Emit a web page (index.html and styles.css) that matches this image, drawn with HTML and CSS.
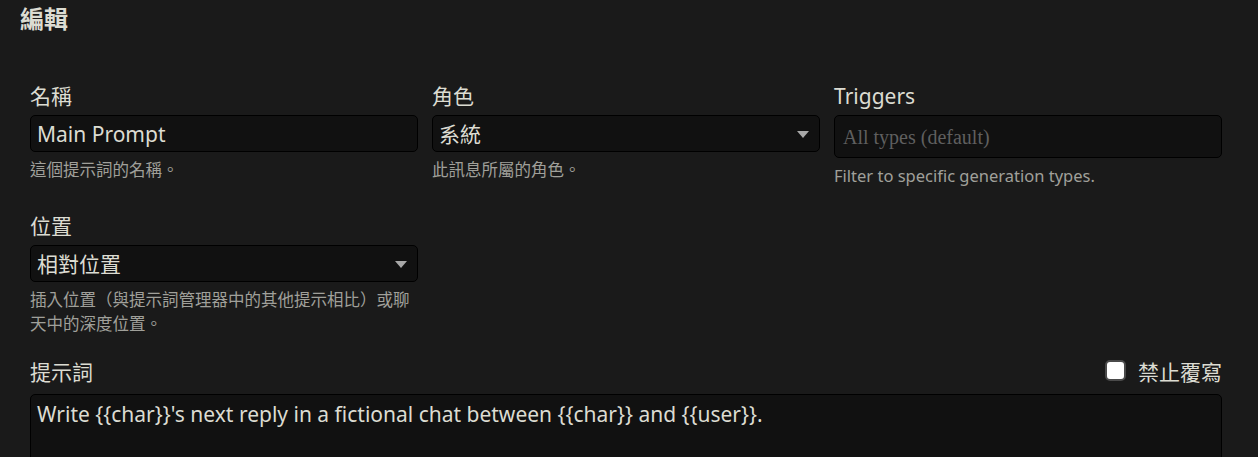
FILE: index.html
```html
<!DOCTYPE html>
<html lang="zh-Hant">
<head>
<meta charset="utf-8">
<title>編輯</title>
<link rel="stylesheet" href="styles.css">
</head>
<body>
<div class="dialog">
  <h3 class="title">編輯</h3>
  <div class="fields">
    <div class="row">
      <div class="field">
        <label class="label">名稱</label>
        <div class="input">Main Prompt</div>
        <div class="help">這個提示詞的名稱。</div>
      </div>
      <div class="field">
        <label class="label">角色</label>
        <div class="input select">系統<span class="arrow"></span></div>
        <div class="help">此訊息所屬的角色。</div>
      </div>
      <div class="field">
        <label class="label">Triggers</label>
        <div class="input multi"><span class="placeholder">All types (default)</span></div>
        <div class="help">Filter to specific generation types.</div>
      </div>
    </div>
    <div class="row row-second">
      <div class="field">
        <label class="label">位置</label>
        <div class="input select">相對位置<span class="arrow"></span></div>
        <div class="help">插入位置（與提示詞管理器中的其他提示相比）或聊天中的深度位置。</div>
      </div>
    </div>
    <div class="prompt-head">
      <label class="label">提示詞</label>
      <label class="check"><span class="box"></span>禁止覆寫</label>
    </div>
    <div class="textarea">Write {{char}}'s next reply in a fictional chat between {{char}} and {{user}}.</div>
  </div>
</div>
</body>
</html>
```
FILE: styles.css
```css
html, body {
  margin: 0;
  padding: 0;
  background: #1a1a1a;
  overflow: hidden;
}
body {
  font-family: "Noto Sans", "Noto Sans CJK TC", sans-serif;
  color: #dcdcd2;
  width: 1258px;
  height: 457px;
}
.dialog {
  padding: 0 20px;
}
.title {
  margin: 0;
  padding-top: 2px;
  font-size: 24px;
  font-weight: bold;
  line-height: 34px;
}
.fields {
  width: 1192px;
  margin: 45px 0 0 10px;
}
.row {
  display: grid;
  grid-template-columns: 388px 388px 388px;
  column-gap: 14px;
  align-items: start;
  margin-bottom: 23px;
}
.row-second {
  margin-bottom: 21px;
}
.field {
  display: flex;
  flex-direction: column;
}
.label {
  font-size: 21px;
  line-height: 30px;
  margin-bottom: 4px;
}
.input {
  box-sizing: border-box;
  height: 37px;
  background: #111111;
  border: 1px solid #000;
  border-radius: 5px;
  font-size: 21px;
  line-height: 36px;
  padding: 0 6px;
  position: relative;
}
.input.multi {
  height: 43px;
  line-height: 41px;
  padding: 0 8px;
}
.placeholder {
  font-family: "Liberation Serif", serif;
  color: #5f5f5f;
  font-size: 20px;
}
.arrow {
  position: absolute;
  right: 10px;
  top: 15px;
  width: 0;
  height: 0;
  border-left: 6px solid transparent;
  border-right: 6px solid transparent;
  border-top: 7px solid #a8a8a8;
}
.help {
  font-size: 16.5px;
  line-height: 24px;
  color: #a0a09a;
  margin-top: 6px;
}
.prompt-head {
  display: flex;
  justify-content: space-between;
  align-items: flex-start;
  height: 37px;
}
.prompt-head .label {
  margin: 0;
}
.check {
  display: flex;
  align-items: center;
  font-size: 21px;
  line-height: 30px;
  color: #dcdcd2;
}
.box {
  width: 17px;
  height: 17px;
  background: #fff;
  border: 2px solid #4a4a4a;
  border-radius: 5px;
  margin: -4px 12px 0 0;
}
.textarea {
  box-sizing: border-box;
  height: 120px;
  background: #111111;
  border: 1px solid #000;
  border-radius: 5px;
  font-size: 21px;
  line-height: 38px;
  padding: 0 6px;
}
```
